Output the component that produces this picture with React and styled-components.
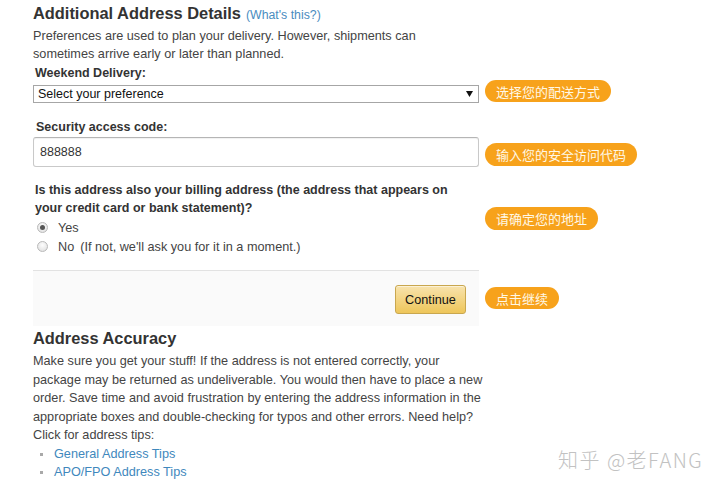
import React from "react";
import styled, { createGlobalStyle } from "styled-components";

const Global = createGlobalStyle`
  html, body { margin: 0; padding: 0; background: #fff; }
  body { font-family: "Liberation Sans", Arial, sans-serif; color: #444; }
`;

const Page = styled.div`
  position: relative;
  width: 720px;
  height: 489px;
  overflow: hidden;
  padding-left: 33px;
  box-sizing: border-box;
`;

const Heading = styled.h2`
  margin: ${(p) => p.$mt || 0}px 0 0;
  height: 20px;
  font-size: 16.4px;
  line-height: 20px;
  font-weight: bold;
  color: #333;
  white-space: nowrap;
`;

const Small = styled.a`
  font-size: 12.3px;
  line-height: 1;
  font-weight: normal;
  color: #4a8cc0;
  text-decoration: none;
  margin-left: 5px;
`;

const Para = styled.p`
  margin: ${(p) => p.$mt || 0}px 0 0;
  font-size: 12.7px;
  line-height: ${(p) => p.$lh || 18}px;
  color: #444;
  white-space: nowrap;
`;

const Label = styled.div`
  margin: ${(p) => p.$mt || 0}px 0 0 ${(p) => p.$ml || 2}px;
  font-size: 12.5px;
  line-height: 18px;
  font-weight: bold;
  color: #333;
  white-space: nowrap;
`;

const Row = styled.div`
  display: grid;
  grid-template-columns: 446px auto;
  column-gap: 6px;
  align-items: start;
  justify-items: start;
  margin-top: ${(p) => p.$mt || 0}px;
`;

const Col = styled.div`
  width: 446px;
`;

const Badge = styled.span`
  display: inline-flex;
  align-items: center;
  height: ${(p) => p.$h || 22}px;
  padding: 0 11px;
  margin-top: ${(p) => p.$mt || 0}px;
  border-radius: 12px;
  background: #f7a21b;
  color: #fff8e6;
  font-family: "Noto Sans CJK SC", sans-serif;
  font-size: 13px;
  white-space: nowrap;
`;

const SelectBox = styled.div`
  box-sizing: border-box;
  width: 446px;
  height: 18px;
  border: 1px solid #a6a6a6;
  display: flex;
  align-items: center;
  justify-content: space-between;
  padding: 0 5px 0 4px;
  font-size: 12.5px;
  color: #111;
  background: #fff;
`;

const TextInput = styled.input`
  box-sizing: border-box;
  width: 446px;
  height: 30px;
  border: 1px solid #c9c9c9;
  border-top-color: #b5b5b5;
  border-radius: 3px;
  padding: 0 6px;
  font-family: "Liberation Sans", Arial, sans-serif;
  font-size: 12.5px;
  color: #333;
  box-shadow: inset 0 1px 1px rgba(0, 0, 0, 0.06);
  outline: none;
`;

const RadioRow = styled.label`
  display: flex;
  align-items: center;
  height: 19px;
  padding-left: 4px;
  font-size: 12.7px;
  color: #444;
  white-space: nowrap;
`;

const RadioDot = styled.span`
  box-sizing: border-box;
  width: 11px;
  height: 11px;
  border-radius: 50%;
  border: 1px solid #b9b9b9;
  background: radial-gradient(circle at 50% 35%, #fdfdfd, #dcdcdc);
  margin-right: 10px;
  display: flex;
  align-items: center;
  justify-content: center;
  &::after {
    content: "";
    width: 5px;
    height: 5px;
    border-radius: 50%;
    background: ${(p) => (p.$on ? "#555" : "transparent")};
  }
`;

const Gap = styled.span`
  display: inline-block;
  width: 6px;
`;

const ActionBar = styled.div`
  box-sizing: border-box;
  width: 446px;
  height: 56px;
  border-top: 1px solid #e2e2e2;
  background: #fafafa;
  display: flex;
  justify-content: flex-end;
  align-items: flex-start;
  padding: 14px 13px 0 0;
`;

const Button = styled.button`
  width: 71px;
  height: 29px;
  border: 1px solid #c9a74f;
  border-radius: 3px;
  background: linear-gradient(#f8e3ad, #eec65a);
  font-family: "Liberation Sans", Arial, sans-serif;
  font-size: 12.7px;
  color: #111;
  box-shadow: inset 0 1px 0 rgba(255, 255, 255, 0.5);
  padding: 0;
`;

const List = styled.ul`
  margin: 0;
  padding: 0 0 0 21px;
  list-style: none;
`;

const Item = styled.li`
  position: relative;
  font-size: 12.7px;
  line-height: 18px;
  &::before {
    content: "";
    position: absolute;
    left: -14px;
    top: 8px;
    width: 3px;
    height: 3px;
    background: #a9a9a9;
  }
`;

const Link = styled.a`
  color: #3f88bd;
  text-decoration: none;
`;

const Watermark = styled.div`
  position: absolute;
  left: 558px;
  top: 447px;
  font-family: "Noto Sans CJK SC", "Liberation Sans", sans-serif;
  font-size: 20px;
  line-height: 26px;
  letter-spacing: 1.5px;
  font-weight: 300;
  color: #c2c2c2;
  white-space: nowrap;
`;

export default function App() {
  return (
    <>
      <Global />
      <Page>
        <Heading $mt={3}>
          Additional Address Details<Small href="#">(What's this?)</Small>
        </Heading>
        <Para $mt={4}>
          Preferences are used to plan your delivery. However, shipments can
          <br />
          sometimes arrive early or later than planned.
        </Para>
        <Label $mt={1}>Weekend Delivery:</Label>
        <Row $mt={3}>
          <SelectBox>
            <span>Select your preference</span>
            <svg width="7" height="6" viewBox="0 0 7 6">
              <path d="M0 0H7L3.5 6Z" fill="#111" />
            </svg>
          </SelectBox>
          <Badge $mt={-5}>选择您的配送方式</Badge>
        </Row>
        <Label $mt={15} $ml={3}>Security access code:</Label>
        <Row $mt={1}>
          <TextInput readOnly value="888888" />
          <Badge $mt={6} $h={23}>输入您的安全访问代码</Badge>
        </Row>
        <Row $mt={14}>
          <Col>
            <Label $ml={2}>
              Is this address also your billing address (the address that appears on
              <br />
              your credit card or bank statement)?
            </Label>
            <RadioRow style={{ marginTop: 1 }}>
              <RadioDot $on />
              Yes
            </RadioRow>
            <RadioRow>
              <RadioDot />
              No<Gap />(If not, we'll ask you for it in a moment.)
            </RadioRow>
          </Col>
          <Badge $mt={26} $h={23}>请确定您的地址</Badge>
        </Row>
        <Row $mt={14}>
          <ActionBar>
            <Button>Continue</Button>
          </ActionBar>
          <Badge $mt={17}>点击继续</Badge>
        </Row>
        <Heading $mt={2}>Address Accuracy</Heading>
        <Para $mt={4} $lh={18.5}>
          Make sure you get your stuff! If the address is not entered correctly, your
          <br />
          package may be returned as undeliverable. You would then have to place a new
          <br />
          order. Save time and avoid frustration by entering the address information in the
          <br />
          appropriate boxes and double-checking for typos and other errors. Need help?
          <br />
          Click for address tips:
        </Para>
        <List>
          <Item>
            <Link href="#">General Address Tips</Link>
          </Item>
          <Item>
            <Link href="#">APO/FPO Address Tips</Link>
          </Item>
        </List>
        <Watermark>知乎 @老FANG</Watermark>
      </Page>
    </>
  );
}
